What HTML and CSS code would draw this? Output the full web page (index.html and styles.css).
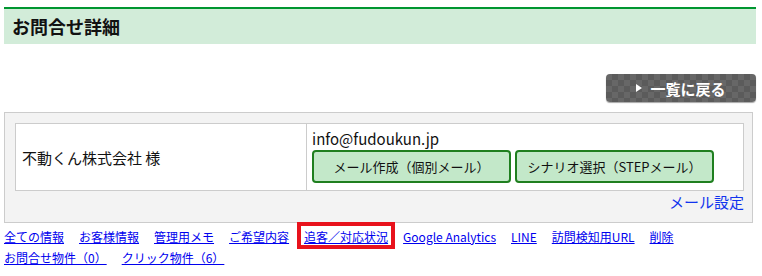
FILE: index.html
```html
<!DOCTYPE html>
<html lang="ja">
<head>
    <meta charset="UTF-8">
    <meta name="viewport" content="width=device-width, initial-scale=1.0">
    <title>お問合せ詳細</title>
    <link rel="stylesheet" href="styles.css">
</head>
<body>
    <div class="page">
        <h1 class="page-title">お問合せ詳細</h1>

        <div class="toolbar">
            <a class="back-btn" href="#">一覧に戻る</a>
        </div>

        <div class="panel">
            <table class="info-table">
                <tr>
                    <td class="name-cell">不動くん株式会社 様</td>
                    <td class="mail-cell">
                        <div class="mail-address">info@fudoukun.jp</div>
                        <div class="mail-actions">
                            <button class="mail-btn">メール作成（個別メール）</button>
                            <button class="mail-btn">シナリオ選択（STEPメール）</button>
                        </div>
                    </td>
                </tr>
            </table>
            <div class="mail-setting"><a href="#">メール設定</a></div>
        </div>

        <div class="tabs">
            <a href="#">全ての情報</a>
            <a href="#">お客様情報</a>
            <a href="#">管理用メモ</a>
            <a href="#">ご希望内容</a>
            <a href="#" class="marked">追客／対応状況</a>
            <a href="#">Google Analytics</a>
            <a href="#">LINE</a>
            <a href="#">訪問検知用URL</a>
            <a href="#">削除</a>
            <a href="#">お問合せ物件（0）</a>
            <a href="#">クリック物件（6）</a>
        </div>
    </div>
</body>
</html>
```

FILE: styles.css
```css
body {
    margin: 0;
    font-family: "Noto Sans CJK JP", "Noto Sans", sans-serif;
    color: #111;
    background: #fff;
}

.page {
    padding: 7px 6px 0 4px;
}

.page-title {
    margin: 0;
    height: 35px;
    line-height: 35px;
    padding-left: 8px;
    border-top: 2px solid #009630;
    background-color: #d2ecd9;
    font-size: 18px;
    font-weight: bold;
}

.toolbar {
    display: flex;
    justify-content: flex-end;
    margin-top: 30px;
}

.back-btn {
    display: flex;
    align-items: center;
    justify-content: center;
    gap: 8px;
    width: 150px;
    height: 28px;
    border-radius: 4px;
    background: repeating-conic-gradient(#5b5b5b 0 25%, #676767 0 50%) 0 0 / 12px 12px;
    box-shadow: 0 1px 1px rgba(0,0,0,0.35);
    color: #fff;
    font-size: 15px;
    font-weight: bold;
    text-decoration: none;
}

.back-btn::before {
    content: "";
    border-left: 6px solid #fff;
    border-top: 4px solid transparent;
    border-bottom: 4px solid transparent;
}

.panel {
    margin-top: 10px;
    margin-right: 3px;
    padding: 10px 8px 10px 10px;
    border: 1px solid #cccccc;
    background-color: #f3f3f3;
}

.info-table {
    width: 100%;
    border-collapse: collapse;
    background-color: #fff;
    font-size: 15px;
}

.info-table td {
    border: 1px solid #cccccc;
}

.name-cell {
    width: 284px;
    padding: 0 0 0 6px;
    vertical-align: middle;
}

.mail-cell {
    padding: 5px 6px 7px 5px;
    vertical-align: top;
}

.mail-address {
    line-height: 20px;
}

.mail-actions {
    display: flex;
    gap: 4px;
    margin-top: 1px;
}

.mail-btn {
    width: 199px;
    height: 33px;
    padding: 0;
    border: 2px solid #1f7f1f;
    border-radius: 4px;
    background-color: #c3e8c9;
    color: #111;
    font-family: inherit;
    font-size: 13px;
    cursor: pointer;
}

.mail-setting {
    text-align: right;
    line-height: 21px;
    font-size: 15px;
}

.mail-setting a {
    color: #1133ee;
    text-decoration: none;
}

.tabs {
    display: flex;
    flex-wrap: wrap;
    column-gap: 15px;
    margin-top: 3px;
    font-size: 12px;
    line-height: 21px;
}

.tabs a {
    color: #0000ee;
}

.tabs a.marked {
    position: relative;
}

.tabs a.marked::after {
    content: "";
    position: absolute;
    left: -7px;
    right: -7px;
    top: -4px;
    bottom: -2px;
    border: 4px solid #e8121c;
}
```
